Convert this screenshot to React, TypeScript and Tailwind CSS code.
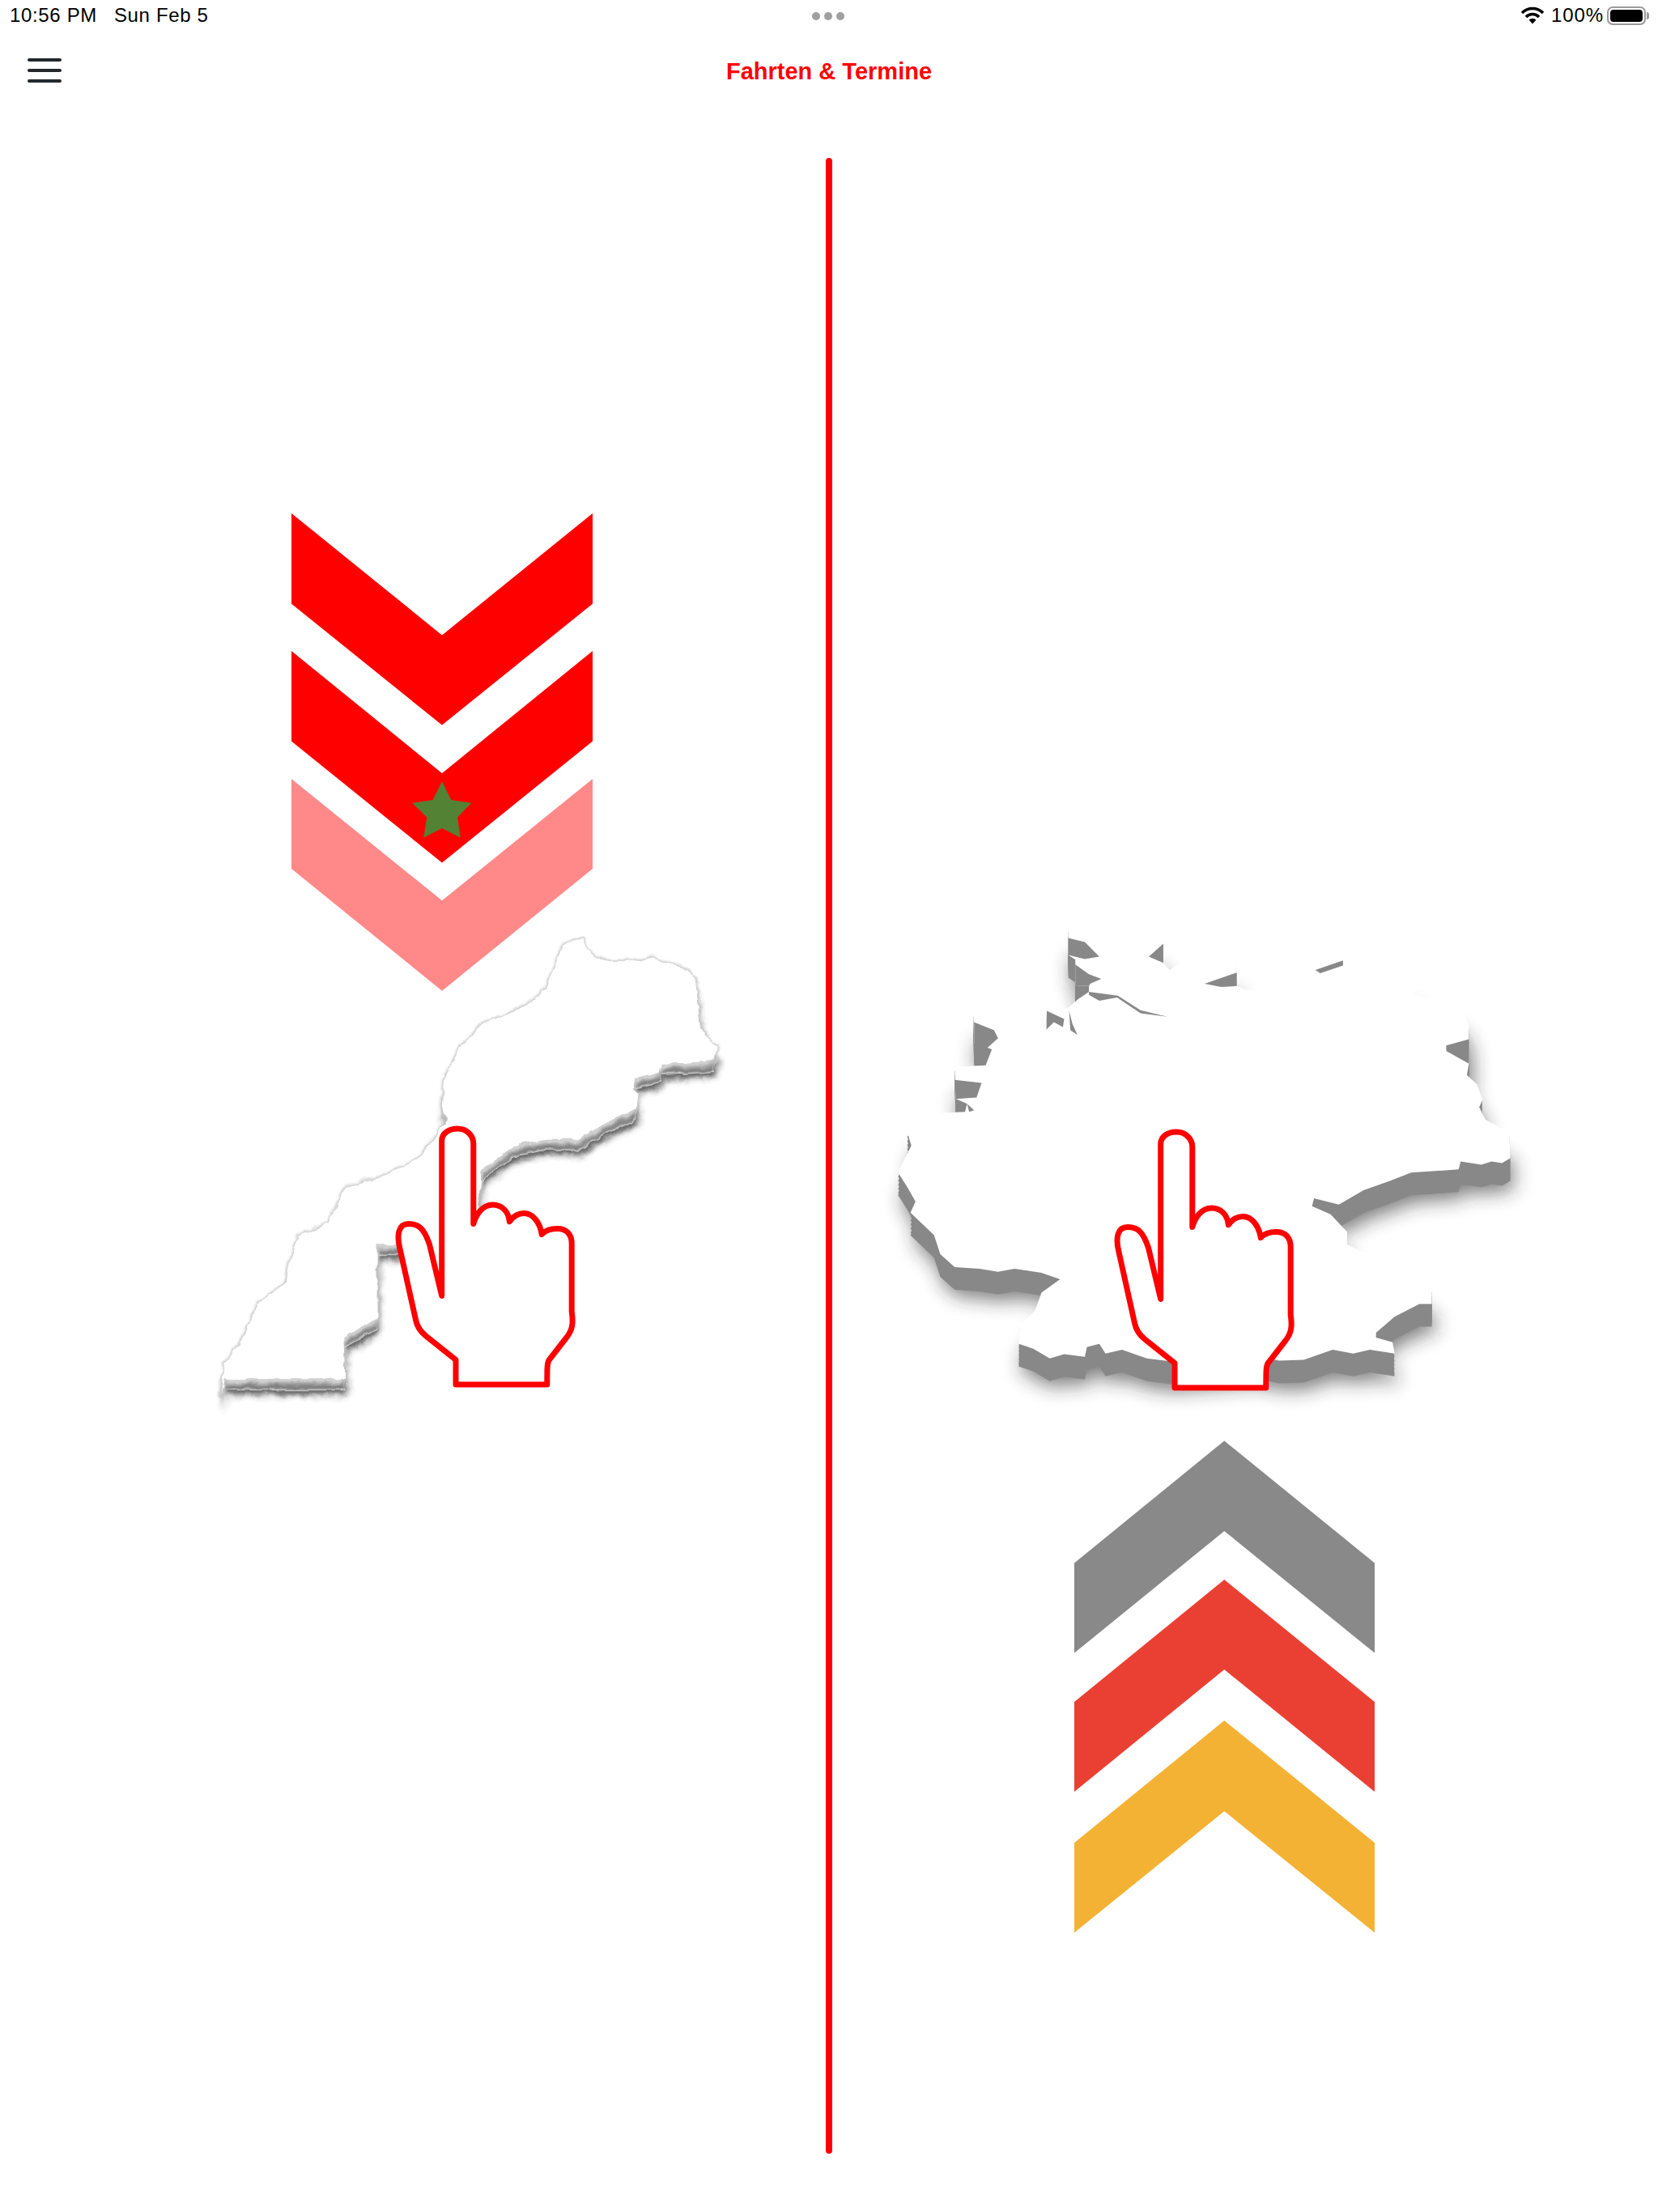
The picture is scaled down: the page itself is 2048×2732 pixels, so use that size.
import { Fragment } from "react";

const font = "font-['Liberation_Sans',Arial,sans-serif]";

// traced outlines, in crop coordinates (mapped to the page with MOROCCO_TF / GERMANY_TF)
const MOROCCO =
  "1050,95 1062,88 1075,85 1105,75 1115,105 1135,125 1160,140 1200,150 1240,140 1270,145 1310,130 1325,150 1380,160 1425,195 1432,250 1440,340 1455,380 1490,410 1480,455 1400,462 1330,465 1325,490 1255,510 1250,545 1265,560 1258,605 1190,640 1130,675 1095,705 1070,700 1000,700 910,720 860,760 815,800 795,1200 640,1200 620,1030 520,1030 520,1260 425,1320 430,1450 85,1450 75,1505 85,1400 130,1340 150,1290 180,1220 260,1150 270,1090 300,1000 385,960 430,850 530,820 640,760 720,640 705,600 710,520 760,410 825,340 950,280 1000,230";
const MOROCCO_TF = "translate(240 1130) scale(0.4337 0.3954)";

const GERMANY =
  "450,40 530,48 610,60 680,90 680,150 695,172 735,140 800,175 855,150 858,222 880,235 920,235 950,190 1020,180 1050,150 1110,150 1150,155 1200,180 1285,205 1290,250 1360,270 1400,280 1420,345 1420,465 1415,500 1440,530 1452,575 1452,620 1460,640 1518,680 1520,760 1500,775 1475,770 1450,780 1400,770 1395,795 1280,805 1230,830 1165,860 1105,905 1045,885 1040,910 1085,935 1125,990 1125,1030 1200,1075 1330,1165 1330,1215 1300,1215 1240,1255 1195,1305 1195,1320 1235,1335 1240,1370 1180,1358 1140,1370 1090,1358 1020,1390 960,1392 900,1375 700,1395 640,1385 580,1358 540,1370 525,1340 495,1350 490,1380 440,1372 405,1385 365,1355 330,1340 335,1280 370,1235 385,1180 430,1138 385,1118 320,1105 280,1115 235,1105 175,1100 140,1060 125,1000 68,930 80,895 60,850 38,805 70,720 60,680 110,620 200,615 205,590 178,575 175,475 250,470 265,420 222,400 220,305 325,280 365,300 395,355 398,300 450,290 475,262 500,240 500,222 467,220 467,140 450,125";
const GERMANY_TF = "translate(1090 1130) scale(0.5102 0.3954)";

const GERMANY_GAPS = [
  "450,72 490,85 525,130 490,138 450,125",
  "467,155 500,185 530,200 503,215 500,222 467,220",
  "500,240 570,252 625,298 690,318 625,307 568,258 525,268 500,250",
  "680,90 645,130 680,150",
  "858,180 858,222 820,225 780,215",
  "1048,172 1115,142 1115,158 1060,182",
  "1420,388 1365,408 1365,425 1420,465",
  "222,335 270,360 280,385 250,420 222,400",
  "175,515 240,525 228,570 178,575",
  "398,300 440,325 437,350 415,335 397,358",
  "452,300 460,340 472,375 455,360",
  "205,590 222,610 210,615",
  "1445,600 1452,580 1452,620",
];

const HAND =
  "M545.7 1600.5 V1408.8 C545.7 1400 554 1394 565.2 1394 C576 1394 584.8 1402 584.8 1412.7 V1511.6 C588 1500 596 1488 608.6 1488 C620 1488 628 1496 629.4 1508.8 C634 1502 640 1498.5 647.6 1498.5 C658 1498.5 667 1510 669.3 1524.6 C674 1519 681 1517.5 688.8 1517.5 C699 1517.5 706.2 1524 706.2 1536 V1620 C708 1632 708 1642 699.7 1652 L678 1680 C675.8 1684 675.8 1690 675.8 1710 H563 V1679.6 L526 1650 C520 1645 515 1638 513.5 1630 L493.7 1541 C490 1525 492 1511.6 505 1511.6 C518 1511.6 524 1518 530.5 1537 Z";

const Hand = ({ dx, dy }: { dx: number; dy: number }) => (
  <path
    d={HAND}
    transform={`translate(${dx} ${dy})`}
    fill="#ffffff"
    stroke="#ff0000"
    strokeWidth={7}
    strokeLinejoin="round"
  />
);

const BlurDefs = () => (
  <defs>
    <filter id="b1" x="-10%" y="-10%" width="120%" height="120%">
      <feGaussianBlur stdDeviation="1.6" />
    </filter>
    <filter id="b4" x="-10%" y="-10%" width="120%" height="120%">
      <feGaussianBlur stdDeviation="4" />
    </filter>
    <filter id="b10" x="-10%" y="-10%" width="120%" height="120%">
      <feGaussianBlur stdDeviation="12" />
    </filter>
    {/* rough coast line */}
    <filter id="rough" x="-5%" y="-5%" width="110%" height="110%">
      <feTurbulence type="fractalNoise" baseFrequency="0.07" numOctaves="2" seed="4" />
      <feDisplacementMap in="SourceGraphic" scale="7" xChannelSelector="R" yChannelSelector="G" />
    </filter>
  </defs>
);

const MoroccoMap = () => (
  <g filter="url(#rough)">
    <g filter="url(#b4)" opacity={0.85}>
      <polygon points={MOROCCO} transform={`translate(2 19) ${MOROCCO_TF}`} fill="#333333" />
    </g>
    <polygon points={MOROCCO} transform={`translate(0 14) ${MOROCCO_TF}`} fill="#ffffff" />
    <g filter="url(#b1)">
      <polygon points={MOROCCO} transform={`translate(0 13) ${MOROCCO_TF}`} fill="#6e6e6e" />
    </g>
    <g filter="url(#b4)">
      <polygon points={MOROCCO} transform={`translate(0 5) ${MOROCCO_TF}`} fill="#ffffff" />
    </g>
    <g filter="url(#b1)">
      <polygon
        points={MOROCCO}
        transform={MOROCCO_TF}
        fill="none"
        stroke="#c4c4c4"
        strokeWidth={3.5}
        vectorEffect="non-scaling-stroke"
      />
    </g>
    <polygon points={MOROCCO} transform={MOROCCO_TF} fill="#ffffff" />
  </g>
);

const GermanyMap = () => (
  <g>
    <g filter="url(#b10)" opacity={0.6}>
      <polygon points={GERMANY} transform={`translate(4 36) ${GERMANY_TF}`} fill="#222222" />
    </g>
    {[5, 10, 15, 20, 25, 28].map((y) => (
      <Fragment key={y}>
        <polygon points={GERMANY} transform={`translate(0 ${y}) ${GERMANY_TF}`} fill="#888888" />
      </Fragment>
    ))}
    <polygon points={GERMANY} transform={GERMANY_TF} fill="#ffffff" />
    <g transform={GERMANY_TF}>
      {GERMANY_GAPS.map((p) => (
        <polygon key={p} points={p} fill="#888888" />
      ))}
    </g>
  </g>
);

const StatusBar = () => (
  <div className={`relative flex h-[38px] items-center justify-between pl-[12px] pr-[11px] text-[24px] leading-none text-black ${font}`}>
    <div className="flex gap-[21px] tracking-[0.65px]">
      <span>10:56 PM</span>
      <span>Sun Feb 5</span>
    </div>
    <div className="absolute left-[1003px] top-[15px] flex gap-[5px]">
      <span className="h-[10px] w-[10px] rounded-full bg-[#a0a0a0]" />
      <span className="h-[10px] w-[10px] rounded-full bg-[#a0a0a0]" />
      <span className="h-[10px] w-[10px] rounded-full bg-[#a0a0a0]" />
    </div>
    <div className="flex items-center">
      <svg width="28" height="22" viewBox="0 0 28 22" className="mr-[9px]">
        <path d="M1 8 A18 18 0 0 1 27 8" fill="none" stroke="#000" strokeWidth="3.6" />
        <path d="M6 13 A11 11 0 0 1 22 13" fill="none" stroke="#000" strokeWidth="3.6" />
        <path d="M9.5 16.5 A6.5 6.5 0 0 1 18.5 16.5 L14 21.5 Z" fill="#000" />
      </svg>
      <span className="tracking-[0.9px]">100%</span>
      <div className="ml-[4px] h-[23px] w-[48px] rounded-[7px] border-2 border-[#9a9a9a] p-[2px]">
        <div className="h-full w-full rounded-[4px] bg-black" />
      </div>
      <div className="ml-[1px] h-[9px] w-[3px] rounded-r-full bg-[#9a9a9a]" />
    </div>
  </div>
);

const NavBar = () => (
  <div className="relative flex h-[157px] items-start justify-center">
    <div className="absolute left-[34px] top-[34px] flex w-[42px] flex-col gap-[9px]">
      <span className="h-[4px] rounded-full bg-[#22282c]" />
      <span className="h-[4px] rounded-full bg-[#22282c]" />
      <span className="h-[4px] rounded-full bg-[#22282c]" />
    </div>
    <h1 className={`mt-[33px] text-[29px] font-bold leading-[34px] text-[#ff0000] ${font}`}>Fahrten &amp; Termine</h1>
  </div>
);

export default function App() {
  return (
    <div className="flex h-[2732px] w-[2048px] flex-col overflow-hidden bg-white">
      <StatusBar />
      <NavBar />
      <div className="flex h-[2465px]">
        <svg className="w-[1020px] flex-none" height="2465" viewBox="0 195 1020 2465">
          <BlurDefs />
          <polygon points="360,634 546,784.5 732,634 732,745.7 546,895.6 360,745.7" fill="#ff0000" />
          <polygon points="360,804 546,955 732,804 732,915.4 546,1065.6 360,915.4" fill="#ff0000" />
          <polygon points="360,962 546,1112.3 732,962 732,1073 546,1223.8 360,1073" fill="#ff8989" />
          <polygon
            points="546,965 557.3,988 582.3,991.7 565,1009.5 568.7,1034.4 546,1023 523.3,1034.4 527.3,1009.5 509.3,991.7 534.7,988"
            fill="#548235"
          />
          <MoroccoMap />
          <Hand dx={0} dy={0} />
        </svg>
        <div className="h-full w-[8px] flex-none rounded-full bg-[#ff0000]" />
        <svg className="w-[1020px] flex-none" height="2465" viewBox="1028 195 1020 2465">
          <GermanyMap />
          <Hand dx={888} dy={4} />
          <polygon points="1327,1930.6 1512.3,1779.6 1698,1930.6 1698,2041.6 1512.3,1891 1327,2041.6" fill="#898989" />
          <polygon points="1327,2102 1512.3,1951 1698,2102 1698,2213 1512.3,2062 1327,2213" fill="#ea4034" />
          <polygon points="1327,2276 1512.3,2125 1698,2276 1698,2387 1512.3,2237 1327,2387" fill="#f4b235" />
        </svg>
      </div>
    </div>
  );
}
